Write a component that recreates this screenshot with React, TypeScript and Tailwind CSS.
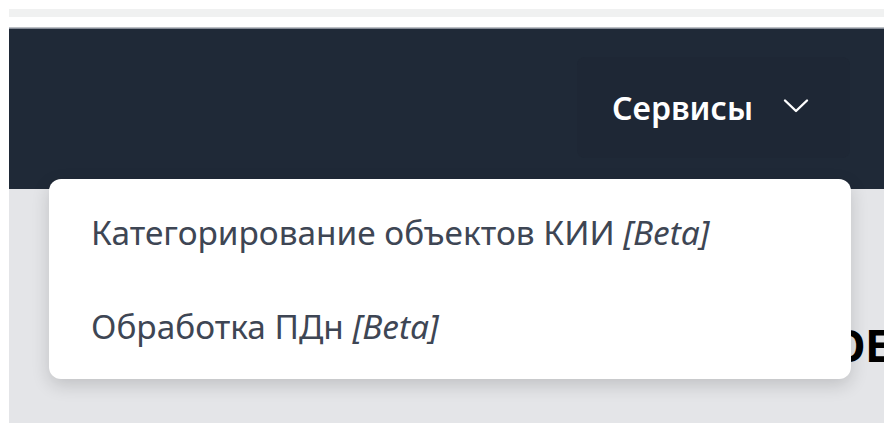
import React from "react";

const sans = { fontFamily: '"Noto Sans", "Open Sans", Arial, sans-serif' };

function Chevron() {
  return (
    <svg width="26" height="16" viewBox="0 0 26 16" fill="none" className="block">
      <path d="M2 2.5 L13 13 L24 2.5" stroke="#ffffff" strokeWidth="2.4" strokeLinecap="round" strokeLinejoin="round" />
    </svg>
  );
}

const services = ["Категорирование объектов КИИ", "Обработка ПДн"];

export default function App() {
  return (
    <div className="relative h-[423px] w-[884px] overflow-hidden bg-white" style={sans}>
      <div className="flex h-full flex-col pl-[9px]">
        {/* browser strip above the site */}
        <div className="mt-[9px] h-[8px] bg-[#f0f1f1]" />
        <div className="h-[10px] bg-white" />
        <div className="h-[2px] bg-gradient-to-b from-[#d9dbdd] to-[#6b7280]" />

        {/* top navigation */}
        <header className="flex h-[160px] justify-end bg-[#1f2937] pr-[34px] pt-[28px]">
          <button className="flex h-[101px] w-[273px] items-center rounded-lg bg-[#1e2735] pl-[35px]">
            <span className="text-[32px] font-semibold leading-none text-white">Сервисы</span>
            <span className="ml-[30px] mt-[-4px]">
              <Chevron />
            </span>
          </button>
        </header>

        {/* page body */}
        <main className="flex flex-1 justify-end overflow-hidden bg-[#e4e5e8] pt-[134px]">
          <h1 className="mr-[-6px] whitespace-nowrap text-[44px] font-bold leading-none text-black">
            ОСНОВНОЕ
          </h1>
        </main>
      </div>

      {/* services dropdown */}
      <div className="absolute left-[49px] top-[179px] flex h-[200px] w-[802px] flex-col rounded-xl bg-white pb-[5px] pt-[7px] shadow-[0_6px_18px_rgba(0,0,0,0.16)]">
        {services.map((name) => (
          <a
            key={name}
            className="flex h-[94px] items-center pl-[42px] text-[33.4px] leading-none text-[#3e4654]"
          >
            {name}&nbsp;<i>[Beta]</i>
          </a>
        ))}
      </div>
    </div>
  );
}
